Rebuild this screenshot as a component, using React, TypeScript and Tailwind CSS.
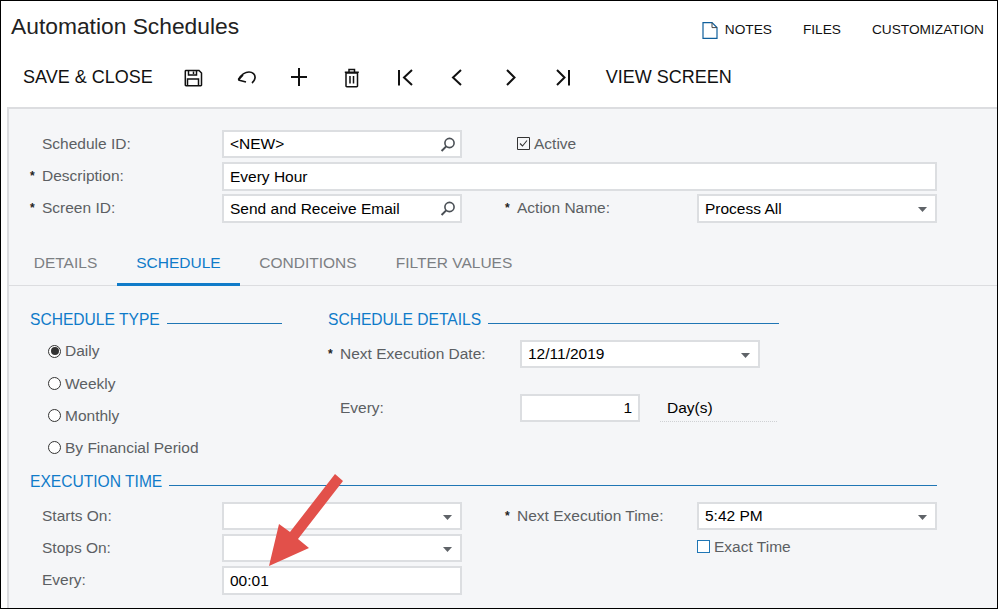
import type { ReactNode } from "react";

function Caret() {
  return (
    <svg width="9" height="5" viewBox="0 0 9 5" className="absolute right-[8px] top-[11px]">
      <path d="M0 0h9L4.5 5z" fill="#5f6368" />
    </svg>
  );
}

function Lens() {
  return (
    <svg width="18" height="18" viewBox="0 0 18 18" fill="none" stroke="#4a4f55" className="absolute right-[3px] top-[4px]">
      <circle cx="10.5" cy="7" r="4.6" strokeWidth="1.6" />
      <path d="M7.2 10.4L2.6 15" strokeWidth="2" />
    </svg>
  );
}

function Field(props: { w: string; value?: string; kind?: "lens" | "caret"; right?: boolean }) {
  return (
    <div
      className={`relative flex h-full shrink-0 items-center border-2 border-[#dcdee1] bg-white px-[6px] text-[15.5px] text-black ${props.w} ${
        props.right ? "justify-end" : ""
      }`}
    >
      {props.value}
      {props.kind === "lens" && <Lens />}
      {props.kind === "caret" && <Caret />}
    </div>
  );
}

function Label(props: { children: ReactNode; req?: boolean; w: string }) {
  return (
    <div className={`relative shrink-0 pb-[1px] text-[15.5px] text-[#5c5f63] ${props.w}`}>
      {props.req && <span className="absolute left-[-12px] top-[3px] text-[12px] font-bold text-[#222]">*</span>}
      {props.children}
    </div>
  );
}

function SectionTitle(props: { title: string; w: string }) {
  return (
    <div className={`flex h-[20px] items-center gap-[7px] text-[15.6px] text-[#0f7bc9] ${props.w}`}>
      <span className="whitespace-nowrap">{props.title}</span>
      <span className="mt-[7px] h-px flex-1 bg-[#1f76b5]" />
    </div>
  );
}

function Radio(props: { label: string; on?: boolean }) {
  return (
    <div className="flex h-[20px] items-center gap-[4px] text-[15.5px] text-[#5c5f63]">
      <span className="flex size-[13px] items-center justify-center rounded-full border border-[#333] bg-white">
        {props.on && <span className="size-[8px] rounded-full bg-[#333]" />}
      </span>
      {props.label}
    </div>
  );
}

function ToolIcon(props: { children: ReactNode }) {
  return (
    <span className="flex h-[24px] w-[52.9px] shrink-0 items-center justify-center">
      <svg width="22" height="22" viewBox="0 0 22 22" fill="none" stroke="#111" strokeWidth="1.5">
        {props.children}
      </svg>
    </span>
  );
}

export default function App() {
  return (
    <div className="relative flex h-[609px] w-[998px] flex-col overflow-hidden border border-black bg-white font-['Liberation_Sans',Arial,sans-serif]">
      <header className="h-[106px] shrink-0">
        <div className="flex h-[48px] items-center justify-between pl-[10px] pr-[13px]">
          <h1 className="mt-[2px] text-[22.8px] text-[#222]">Automation Schedules</h1>
          <div className="mt-[19px] flex items-center self-start text-[13.7px] text-[#111]">
            <svg width="16" height="17" viewBox="0 0 16 17" fill="none" className="mr-[7px]">
              <path d="M1 .6h9l5 5v10.8H1z" stroke="#0f5f9c" strokeWidth="1.2" />
              <path d="M10 .6v5h5" stroke="#444" strokeWidth="1" />
            </svg>
            <span>NOTES</span>
            <span className="ml-[31px]">FILES</span>
            <span className="ml-[31px]">CUSTOMIZATION</span>
          </div>
        </div>
        <div className="mt-[15px] flex h-[26px] items-center pl-[22px] text-[18px] text-[#111]">
          <span className="mr-[13.5px] w-[130px] whitespace-nowrap">SAVE &amp; CLOSE</span>
          <ToolIcon>
            <path d="M4 4.5h13l2.5 2.5v12a.7.7 0 0 1-.7.7H4a.7.7 0 0 1-.7-.7V5.2a.7.7 0 0 1 .7-.7z" />
            <path d="M6.5 4.5v4.5h8V4.5M5.5 19.5v-6.5h11v6.5M11.500 5.500v2.500" />
          </ToolIcon>
          <ToolIcon>
            <g strokeWidth="1.7">
              <path d="M3.3 14L8 9M3.3 14l7.700 2" />
              <path d="M3.500 13.500C6 9 10.500 6 14 6c3.500 0 6.500 2.600 6 6-.3 2-1.200 3.600-3 5" />
            </g>
          </ToolIcon>
          <ToolIcon>
            <path d="M11 2v18M3 11h16" strokeWidth="2" />
          </ToolIcon>
          <ToolIcon>
            <path d="M5 7h11.500v13a.8.8 0 0 1-.8.8H5.800a.8.8 0 0 1-.8-.8zM3.800 6.300h14M8 6v-2.500h5.500V6M9 10v7.500M12.500 10v7.500" />
          </ToolIcon>
          <ToolIcon>
            <path d="M5 4v15.500M18 4l-8 7.500 8 7.500" strokeWidth="2" />
          </ToolIcon>
          <ToolIcon>
            <path d="M15 4l-8 7.500 8 7.500" strokeWidth="2" />
          </ToolIcon>
          <ToolIcon>
            <path d="M8 4l7.500 7.500L8 19" strokeWidth="2" />
          </ToolIcon>
          <ToolIcon>
            <path d="M5 4l7.500 7.500L5 19M17 4v15.500" strokeWidth="2" />
          </ToolIcon>
          <span className="ml-[16px] whitespace-nowrap">VIEW SCREEN</span>
        </div>
      </header>

      <main className="ml-[6px] flex flex-1 flex-col border-l-2 border-t-2 border-[#dcdde0] bg-[#f5f6f8]">
        <section className="flex h-[177px] shrink-0 flex-col border-b border-[#dcdde0]">
          <div className="mt-[21px] flex h-[28px] items-center pl-[33px]">
            <Label w="w-[180px]">Schedule ID:</Label>
            <Field w="w-[240px]" value="<NEW>" kind="lens" />
            <span className="ml-[55px] flex items-center gap-[4px] text-[15.5px] text-[#5c5f63]">
              <svg width="13" height="13" viewBox="0 0 13 13" fill="none" className="mb-[1px]">
                <path d="M.5.5h12v12H.5z" stroke="#333" />
                <path d="M3 6.500l2.500 2.500L10 3.500" stroke="#333" strokeWidth="1.1" />
              </svg>
              Active
            </span>
          </div>
          <div className="mt-[4px] flex h-[29px] items-center pl-[33px]">
            <Label req w="w-[180px]">Description:</Label>
            <Field w="w-[715px]" value="Every Hour" />
          </div>
          <div className="mt-[3px] flex h-[29px] items-center pl-[33px]">
            <Label req w="w-[180px]">Screen ID:</Label>
            <Field w="w-[240px]" value="Send and Receive Email" kind="lens" />
            <span className="w-[55px]" />
            <Label req w="w-[180px]">Action Name:</Label>
            <Field w="w-[240px]" value="Process All" kind="caret" />
          </div>
          <nav className="mt-auto flex h-[44px] items-stretch pl-[6px] text-[15.5px] uppercase text-[#7c7f83]">
            <span className="flex w-[102px] items-center justify-center pr-[1px]">Details</span>
            <span className="-mb-[1px] flex w-[123px] items-center justify-center border-b-[3px] border-[#0f7bc9] pt-[1px] text-[#0f7bc9]">
              Schedule
            </span>
            <span className="flex w-[136px] items-center justify-center">Conditions</span>
            <span className="flex w-[156px] items-center justify-center">Filter Values</span>
          </nav>
        </section>

        <section className="flex flex-1 flex-col pl-[21px] pt-[24px]">
          <div className="flex h-[162px] shrink-0">
            <div className="w-[298px] shrink-0">
              <SectionTitle title="SCHEDULE TYPE" w="w-[252px]" />
              <div className="ml-[18px] mt-[11px] flex flex-col gap-[12.3px]">
                <Radio on label="Daily" />
                <Radio label="Weekly" />
                <Radio label="Monthly" />
                <Radio label="By Financial Period" />
              </div>
            </div>
            <div>
              <SectionTitle title="SCHEDULE DETAILS" w="w-[451px]" />
              <div className="mt-[10px] flex h-[28px] items-center pl-[12px]">
                <Label req w="w-[180px]">Next Execution Date:</Label>
                <Field w="w-[240px]" value="12/11/2019" kind="caret" />
              </div>
              <div className="mt-[26px] flex h-[28px] items-center pl-[12px]">
                <Label w="w-[180px]">Every:</Label>
                <Field w="w-[120px]" value="1" right />
                <span className="ml-[20px] flex h-full w-[117px] items-center border-b border-dotted border-[#cfd1d4] pl-[7px] text-[15.5px] text-black">
                  Day(s)
                </span>
              </div>
            </div>
          </div>

          <SectionTitle title="EXECUTION TIME" w="w-[907px]" />
          <div className="ml-[12px] mt-[10px] flex">
            <div className="flex w-[420px] shrink-0 flex-col gap-[4px]">
              <div className="flex h-[28px] items-center">
                <Label w="w-[180px]">Starts On:</Label>
                <Field w="w-[240px]" kind="caret" />
              </div>
              <div className="flex h-[28px] items-center">
                <Label w="w-[180px]">Stops On:</Label>
                <Field w="w-[240px]" kind="caret" />
              </div>
              <div className="flex h-[29px] items-center">
                <Label w="w-[180px]">Every:</Label>
                <Field w="w-[240px]" value="00:01" />
              </div>
            </div>
            <div className="ml-[55px] flex flex-col">
              <div className="flex h-[28px] items-center">
                <Label req w="w-[180px]">Next Execution Time:</Label>
                <Field w="w-[240px]" value="5:42 PM" kind="caret" />
              </div>
              <span className="ml-[180px] mt-[5px] flex items-center gap-[4px] text-[15.5px] text-[#5c5f63]">
                <span className="size-[13px] border border-[#1f76b5] bg-white" />
                Exact Time
              </span>
            </div>
          </div>
        </section>
      </main>

      {/* red callout arrow drawn on top of the form */}
      <svg width="998" height="609" viewBox="0 0 998 609" className="pointer-events-none absolute left-[-1px] top-[-1px]">
        <path d="M335 474L343 481L298 539L309 548L269 566L279 524L290 532z" fill="#e2504a" />
      </svg>
    </div>
  );
}
